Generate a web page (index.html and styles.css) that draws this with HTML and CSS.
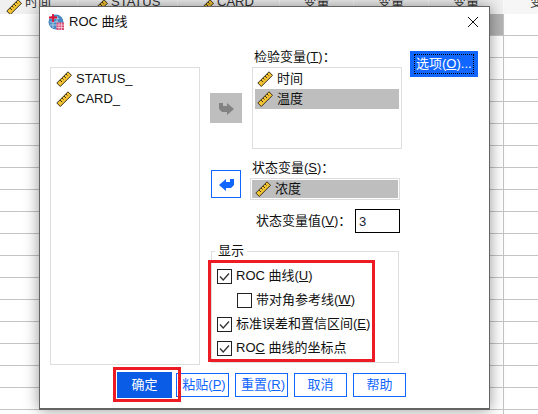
FILE: index.html
```html
<!DOCTYPE html>
<html lang="zh">
<head>
<meta charset="utf-8">
<title>ROC 曲线</title>
<link rel="stylesheet" href="styles.css">
</head>
<body>
<svg class="defs" width="0" height="0" aria-hidden="true">
  <symbol id="ruler" viewBox="0 0 16 16">
    <path d="M.8 12 12 .8l3.500 3.500L4.300 15.500z" fill="#f2c230" stroke="#3b3320" stroke-width="1"/>
    <path d="M4 9l2 2M6 7l1.500 1.500M8 5l2 2M10 3l1.500 1.500" stroke="#3b3320" stroke-width="1" fill="none"/>
  </symbol>
  <symbol id="tick" viewBox="0 0 15 15">
    <path d="M3 7.500 6.200 11 12 4.500" fill="none" stroke="#333" stroke-width="1.300"/>
  </symbol>
</svg>
<div class="sheet">
  <div class="head">
    <div class="hcell w78"><svg class="ric"><use href="#ruler"/></svg><span class="htext">时间</span></div>
    <div class="hcell w100"><svg class="ric"><use href="#ruler"/></svg><span class="htext">STATUS</span></div>
    <div class="hcell w102"><svg class="ric"><use href="#ruler"/></svg><span class="htext">CARD</span></div>
    <div class="hcell w74 center"><span class="htext">变量</span></div>
    <div class="hcell w75 center"><span class="htext">变量</span></div>
    <div class="hcell w75 center"><span class="htext">变量</span></div>
    <div class="hcell last"><span class="htext">变量</span></div>
  </div>
  <div class="rows"><div class="selcell"></div></div>

  <div class="dialog">
    <div class="titlebar">
      <svg class="appicon" viewBox="0 0 16 16" width="16" height="16">
        <circle cx="8" cy="8" r="7.500" fill="#4a8ac4"/>
        <path d="M2 4.500h9M2 8h8M2 11h8M5 2v12M9 2v12" stroke="#bcd8ee" stroke-width=".8"/>
        <path d="M5 0v8M1 3.500h8" stroke="#e01030" stroke-width="1.800"/>
        <rect x="8.500" y="8.500" width="7.500" height="7.500" fill="#d8507a"/>
        <path d="M8.500 11h7.500M8.500 13.500h7.500M11 8.500V16M13.500 8.500V16" stroke="#f6d8e2" stroke-width=".7"/>
      </svg>
      <span class="title">ROC 曲线</span>
      <svg class="close" viewBox="0 0 10 10" width="10" height="10"><path d="M0 0l10 10M10 0 0 10" stroke="#111" stroke-width="1"/></svg>
    </div>

    <div class="main">
      <div class="varlist">
        <div class="item"><svg class="ric"><use href="#ruler"/></svg>STATUS_</div>
        <div class="item"><svg class="ric"><use href="#ruler"/></svg>CARD_</div>
      </div>

      <div class="center-col">
        <div class="picker">
          <div class="mover disabled">
            <svg viewBox="0 0 15 13" width="15" height="13"><path d="M15 7 8 1v3H4V1H0v6l3 3h5v3z" fill="#828282"/></svg>
          </div>
          <div class="target">
            <div class="lbl">检验变量(<u>T</u>)：</div>
            <div class="testlist">
              <div class="item"><svg class="ric"><use href="#ruler"/></svg>时间</div>
              <div class="item sel"><svg class="ric"><use href="#ruler"/></svg>温度</div>
            </div>
          </div>
        </div>
        <div class="picker second">
          <div class="mover active">
            <svg viewBox="0 0 15 13" width="15" height="13"><path d="M0 7l7-6v3h4V1h4v6l-3 3H7v3z" fill="#1166ff"/></svg>
          </div>
          <div class="target">
            <div class="lbl">状态变量(<u>S</u>)：</div>
            <div class="statefield"><div class="item sel"><svg class="ric"><use href="#ruler"/></svg>浓度</div></div>
          </div>
        </div>
        <div class="valrow">
          <span>状态变量值(<u>V</u>)：</span>
          <div class="valbox">3</div>
        </div>
        <fieldset class="group">
          <legend>显示</legend>
          <div class="crow"><span class="cb"><svg width="15" height="15"><use href="#tick"/></svg></span><span>ROC 曲线(<u>U</u>)</span></div>
          <div class="crow indent"><span class="cb"></span><span>带对角参考线(<u>W</u>)</span></div>
          <div class="crow"><span class="cb"><svg width="15" height="15"><use href="#tick"/></svg></span><span>标准误差和置信区间(<u>E</u>)</span></div>
          <div class="crow"><span class="cb"><svg width="15" height="15"><use href="#tick"/></svg></span><span>RO<u>C</u> 曲线的坐标点</span></div>
        </fieldset>
      </div>

      <div class="opt-col">
        <div class="optbtn"><span class="focus">选项(<u>O</u>)...</span></div>
      </div>
    </div>

    <div class="footer">
      <div class="btn primary">确定</div>
      <div class="btn shifted">粘贴(<u>P</u>)</div>
      <div class="btn shifted">重置(<u>R</u>)</div>
      <div class="btn">取消</div>
      <div class="btn">帮助</div>
    </div>

    <div class="mark mark-checks"></div>
    <div class="mark mark-ok"></div>
  </div>
</div>
</body>
</html>
```
FILE: styles.css
```css
* { box-sizing: border-box; }
html, body { margin: 0; padding: 0; }
body {
  width: 538px;
  height: 414px;
  overflow: hidden;
  background: #fff;
  color: #111;
  font: 13px/18px "Liberation Sans", "Noto Sans CJK SC", sans-serif;
}
.defs { position: absolute; }
.sheet { position: relative; width: 538px; height: 414px; overflow: hidden; }
.ric { width: 16px; height: 16px; flex: none; }

.head { display: flex; height: 14px; background: #f0f0f0; }
.hcell {
  display: flex;
  align-items: flex-end;
  gap: 3px;
  padding: 0 0 3px 6px;
  height: 14px;
  overflow: hidden;
  border-right: 1px solid #fafafa;
  font-size: 13px;
  color: #333;
}
.hcell .ric { margin-bottom: -4px; }
.htext { white-space: nowrap; }
.w78 { width: 78px; }
.w100 { width: 100px; padding-left: 14px; }
.w102 { width: 102px; padding-left: 20px; }
.w74 { width: 74px; }
.w75 { width: 75px; }
.center { justify-content: center; padding-left: 0; }
.last { flex: 1; padding-left: 26px; background: #f6f6f6; border: 0; }

.rows {
  position: relative;
  height: 400px;
  background:
    linear-gradient(to right, transparent 503px, #c4c4c4 503px, #c4c4c4 504px, transparent 504px),
    repeating-linear-gradient(to bottom, transparent 0, transparent 21px, #c4c4c4 21px, #c4c4c4 22px);
}
.selcell {
  position: absolute;
  left: 440px;
  top: 0;
  width: 63px;
  height: 21px;
  background: #b4b4b4;
}

.dialog {
  position: absolute;
  left: 39px;
  top: 6px;
  width: 451px;
  height: 404px;
  background: #fff;
  border: 2px solid #646464;
  border-width: 1px 1px 2px 1px;
  box-shadow: 0 0 14px rgba(0, 0, 0, .42);
}

.titlebar { display: flex; align-items: center; height: 30px; padding: 0 11px 0 8px; }
.appicon { flex: none; }
.title { margin-left: 5px; flex: 1; }
.close { flex: none; }

.main { display: flex; padding-left: 10px; height: 328px; }
.varlist {
  width: 150px;
  height: 298px;
  margin-top: 30px;
  padding: 1px 0 0 5px;
  border: 1px solid #dedede;
}
.item { display: flex; align-items: center; gap: 4px; height: 20px; }

.center-col { width: 192px; margin-left: 10px; margin-top: 11px; }
.picker { display: flex; }
.second { margin-top: 10px; }
.target { width: 150px; margin-left: 42px; }
.mover {
  flex: none;
  display: flex;
  align-items: center;
  justify-content: center;
  position: relative;
  width: 32px;
  margin-right: -32px;
}
.mover.disabled { height: 30px; margin-top: 45px; background: #bebebe; }
.mover.active { height: 28px; margin-top: 11px; margin-left: 1px; margin-right: -33px; width: 30px; border: 1px solid #1166ff; }
.lbl { height: 19px; padding-left: 2px; }
.testlist {
  height: 82px;
  padding: 1px 2px 0;
  border: 1px solid #dedede;
}
.testlist .item { padding-left: 2px; }
.sel { background: #bebebe; }
.statefield { height: 22px; padding: 1px; border: 1px solid #dedede; }
.statefield .item { height: 18px; padding-left: 3px; }

.valrow {
  display: flex;
  align-items: center;
  justify-content: space-between;
  height: 24px;
  margin-top: 9px;
  padding: 0 2px 0 46px;
}
.valbox {
  width: 45px;
  height: 24px;
  padding: 3px 0 0 3px;
  border: 1px solid #000;
  color: #223;
}

.group {
  width: 188px;
  height: 121px;
  margin: 9px 0 0 1px;
  padding: 4px 0 0 5px;
  border: 1px solid #dedede;
  min-width: 0;
}
.group legend { padding: 0 3px; margin-left: -2px; }
.crow { display: flex; align-items: center; gap: 4px; height: 24px; white-space: pre; }
.crow.indent { padding-left: 20px; }
.cb {
  flex: none;
  width: 15px;
  height: 15px;
  border: 1px solid #222;
  background: #fff;
}
.cb svg { display: block; margin: -1px; }

.opt-col { margin-left: 8px; padding-top: 14px; }
.optbtn {
  width: 68px;
  height: 26px;
  padding: 3px 4px;
  background: #1166ff;
  color: #fff;
}
.focus {
  display: block;
  height: 20px;
  line-height: 18px;
  border: 1px dotted #000;
  padding-left: 1px;
  white-space: nowrap;
}

.footer { display: flex; align-items: center; gap: 6px; height: 26px; margin-top: 7px; padding-left: 77px; }
.btn {
  width: 53px;
  height: 24px;
  line-height: 22px;
  text-align: center;
  color: #1166ff;
  background: #fff;
  border: 1px solid #1166ff;
  white-space: nowrap;
}
.btn.shifted { padding-left: 3px; }
.btn.primary { width: 55px; height: 26px; line-height: 24px; margin-right: -2px; color: #fff; background: #0a5ce6; border-color: #0a5ce6; }

.mark { position: absolute; border: 3px solid #ed1c24; pointer-events: none; }
.mark-checks { left: 168px; top: 253px; width: 167px; height: 102px; }
.mark-ok { left: 73px; top: 360px; width: 68px; height: 35px; }
```
